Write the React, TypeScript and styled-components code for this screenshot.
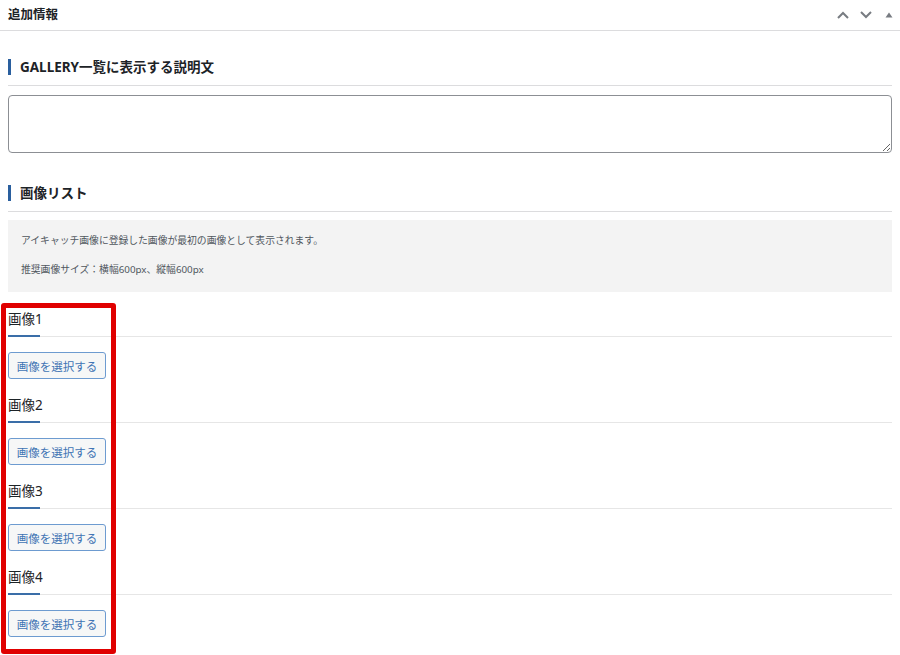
import React from 'react'
import styled, { createGlobalStyle } from 'styled-components'

const GlobalStyle = createGlobalStyle`
  html, body {
    margin: 0;
    padding: 0;
    background: #ffffff;
  }
  body {
    font-family: "Noto Sans", "Noto Sans CJK JP", sans-serif;
    color: #1d2327;
  }
`

const images = ['画像1', '画像2', '画像3', '画像4']

const App = () => {
  return (
    <Page>
      <GlobalStyle />
      <PanelHeader>
        <PanelTitle>追加情報</PanelTitle>
        <HeaderIcons>
          <IconButton aria-label="上へ">
            <svg width="14" height="14" viewBox="0 0 14 14">
              <path d="M2 10 L7 5 L12 10" fill="none" stroke="#787c82" strokeWidth="2" />
            </svg>
          </IconButton>
          <IconButton aria-label="下へ">
            <svg width="14" height="14" viewBox="0 0 14 14">
              <path d="M2 4 L7 9 L12 4" fill="none" stroke="#787c82" strokeWidth="2" />
            </svg>
          </IconButton>
          <IconButton aria-label="折りたたむ">
            <svg width="8" height="8" viewBox="0 0 8 8">
              <path d="M0.5 6.5 L4 1.5 L7.5 6.5 Z" fill="#787c82" />
            </svg>
          </IconButton>
        </HeaderIcons>
      </PanelHeader>

      <Body>
        <SectionHead>
          <SectionTitle>GALLERY一覧に表示する説明文</SectionTitle>
        </SectionHead>
        <TextArea />

        <SectionHead $top={32}>
          <SectionTitle>画像リスト</SectionTitle>
        </SectionHead>
        <Notice>
          <NoticeLine>アイキャッチ画像に登録した画像が最初の画像として表示されます。</NoticeLine>
          <NoticeLine>推奨画像サイズ：横幅600px、縦幅600px</NoticeLine>
        </Notice>

        <ImageList>
          {images.map((label) => (
            <ImageItem key={label}>
              <ImageHead>{label}</ImageHead>
              <SelectButton>画像を選択する</SelectButton>
            </ImageItem>
          ))}
        </ImageList>
      </Body>

      <Highlight />
    </Page>
  )
}

const Page = styled.div`
  position: relative;
  width: 900px;
  height: 655px;
  overflow: hidden;
  background: #ffffff;
`

const PanelHeader = styled.div`
  height: 30px;
  display: flex;
  align-items: center;
  justify-content: space-between;
  padding: 0 4px 0 8px;
  border-bottom: 1px solid #dcdcde;
`

const PanelTitle = styled.h2`
  margin: 0;
  font-size: 12.5px;
  font-weight: 700;
  color: #1d2327;
  line-height: 1;
`

const HeaderIcons = styled.div`
  display: flex;
  align-items: center;
  gap: 9px;
`

const IconButton = styled.span`
  display: flex;
  align-items: center;
  justify-content: center;
  width: 14px;
  height: 14px;
`

const Body = styled.div`
  padding: 28px 8px 0 8px;
`

const SectionHead = styled.div<{ $top?: number }>`
  margin-top: ${(p) => p.$top ?? 0}px;
  padding-bottom: 10px;
  border-bottom: 1px solid #dcdcde;
`

const SectionTitle = styled.h3`
  margin: 0;
  border-left: 3px solid #2a5f9e;
  padding-left: 9px;
  font-size: 13.5px;
  font-weight: 700;
  line-height: 16px;
  color: #1d2327;
`

const TextArea = styled.textarea`
  display: block;
  box-sizing: border-box;
  width: 100%;
  height: 58px;
  margin-top: 9px;
  border: 1px solid #8c8f94;
  border-radius: 4px;
  background: #ffffff;
  font-family: inherit;
`

const Notice = styled.div`
  margin-top: 8px;
  background: #f3f3f3;
  padding: 14px 13px;
  height: 72px;
  box-sizing: border-box;
`

const NoticeLine = styled.p`
  margin: 0 0 15px 0;
  font-size: 9.8px;
  line-height: 14px;
  color: #50575e;

  &:last-child {
    margin-bottom: 0;
  }
`

const ImageList = styled.div`
  padding-top: 17px;
  display: flex;
  flex-direction: column;
  gap: 16px;
`

const ImageItem = styled.div`
  display: flex;
  flex-direction: column;
  align-items: flex-start;
`

const ImageHead = styled.h4`
  position: relative;
  align-self: stretch;
  margin: 0;
  padding-bottom: 7px;
  font-size: 13.5px;
  font-weight: 400;
  line-height: 20px;
  color: #1d2327;
  border-bottom: 1px solid #e6e6e6;

  &::after {
    content: '';
    position: absolute;
    left: 0;
    bottom: -1px;
    width: 32px;
    height: 2px;
    background: #3a6ea8;
  }
`

const SelectButton = styled.button`
  margin-top: 15px;
  box-sizing: border-box;
  height: 27px;
  width: 98px;
  padding: 0;
  border: 1px solid #6d9bd0;
  border-radius: 3px;
  background: #f6f7f7;
  color: #3f74b4;
  font-family: inherit;
  font-size: 11.5px;
  font-weight: 400;
  cursor: pointer;
`

const Highlight = styled.div`
  position: absolute;
  left: 1px;
  top: 303px;
  width: 115px;
  height: 351px;
  box-sizing: border-box;
  border: 5px solid #e00000;
  border-radius: 3px;
  pointer-events: none;
`

export default App
